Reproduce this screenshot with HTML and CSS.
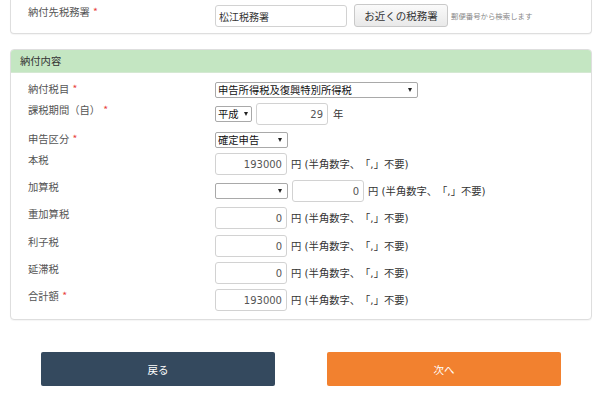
FILE: index.html
```html
<!DOCTYPE html>
<html lang="ja">
<head>
<meta charset="utf-8">
<title>納付内容</title>
<link rel="stylesheet" href="styles.css">
</head>
<body>
<div class="panel panel-top">
  <div class="row">
    <div class="label">納付先税務署 <span class="req">*</span></div>
    <div class="field">
      <input class="inp inp-office" type="text" value="松江税務署">
      <button class="btn-near" type="button">お近くの税務署</button>
      <span class="hint">郵便番号から検索します</span>
    </div>
  </div>
</div>

<div class="panel panel-main">
  <div class="panel-heading">納付内容</div>
  <div class="panel-body">
    <div class="row row-sel">
      <div class="label">納付税目 <span class="req">*</span></div>
      <div class="field">
        <span class="sel sel-wide"><select><option>申告所得税及復興特別所得税</option></select></span>
      </div>
    </div>
    <div class="row row-period">
      <div class="label">課税期間（自） <span class="req">*</span></div>
      <div class="field">
        <span class="sel sel-era"><select><option>平成</option></select></span>
        <input class="inp inp-num" type="text" value="29">
        <span class="unit">年</span>
      </div>
    </div>
    <div class="row row-sel row-kind">
      <div class="label">申告区分 <span class="req">*</span></div>
      <div class="field">
        <span class="sel sel-mid"><select><option>確定申告</option></select></span>
      </div>
    </div>
    <div class="row">
      <div class="label">本税</div>
      <div class="field">
        <input class="inp inp-num" type="text" value="193000">
        <span class="unit">円 (半角数字、「,」不要)</span>
      </div>
    </div>
    <div class="row">
      <div class="label">加算税</div>
      <div class="field">
        <span class="sel sel-mid"><select><option></option></select></span>
        <input class="inp inp-num" type="text" value="0">
        <span class="unit">円 (半角数字、「,」不要)</span>
      </div>
    </div>
    <div class="row">
      <div class="label">重加算税</div>
      <div class="field">
        <input class="inp inp-num" type="text" value="0">
        <span class="unit">円 (半角数字、「,」不要)</span>
      </div>
    </div>
    <div class="row row-gap6">
      <div class="label">利子税</div>
      <div class="field">
        <input class="inp inp-num" type="text" value="0">
        <span class="unit">円 (半角数字、「,」不要)</span>
      </div>
    </div>
    <div class="row">
      <div class="label">延滞税</div>
      <div class="field">
        <input class="inp inp-num" type="text" value="0">
        <span class="unit">円 (半角数字、「,」不要)</span>
      </div>
    </div>
    <div class="row">
      <div class="label">合計額 <span class="req">*</span></div>
      <div class="field">
        <input class="inp inp-num" type="text" value="193000">
        <span class="unit">円 (半角数字、「,」不要)</span>
      </div>
    </div>
  </div>
</div>

<div class="actions">
  <button class="btn btn-back" type="button">戻る</button>
  <button class="btn btn-next" type="button">次へ</button>
</div>
</body>
</html>
```

FILE: styles.css
```css
* { box-sizing: border-box; }

html, body {
  margin: 0;
  padding: 0;
  background: #fff;
}

body {
  font-family: "DejaVu Sans", "Noto Sans CJK JP", sans-serif;
  font-size: 10.3px;
  line-height: 14px;
  color: #333;
  width: 600px;
  height: 394px;
  overflow: hidden;
  text-spacing-trim: space-all;
}

.panel {
  margin: 0 8px 0 10px;
  border: 1px solid #dedede;
  border-radius: 4px;
  background: #fff;
  box-shadow: 0 1px 1px rgba(0, 0, 0, 0.04);
}

.panel-top {
  border-top: 0;
  border-top-left-radius: 0;
  border-top-right-radius: 0;
  padding: 5px 17px 6px 17px;
}

.panel-main {
  margin-top: 15px;
}

.panel-heading {
  background: #c4e6c2;
  border-bottom: 1px solid #d4e8d2;
  border-top-left-radius: 3px;
  border-top-right-radius: 3px;
  height: 23px;
  line-height: 23px;
  padding: 0 9px;
  color: #333;
}

.panel-body {
  padding: 9px 17px 8px 17px;
  display: flex;
  flex-direction: column;
  gap: 5px;
}

.row {
  display: flex;
  align-items: flex-start;
}

.row-kind { margin-top: 2px; }
.row-gap6 { margin-top: 1px; }

.label {
  width: 187px;
  flex: none;
  color: #555;
  line-height: 14px;
}

.req {
  color: #e8413c;
  font-family: "Noto Sans CJK JP", sans-serif;
}

.field {
  display: flex;
  align-items: center;
  gap: 4px;
  min-height: 16px;
}

.inp {
  height: 22px;
  border: 1px solid #d2d2d2;
  border-radius: 3px;
  font-family: inherit;
  font-size: 10px;
  color: #555;
  padding: 0 4px;
  margin: 0;
  background: #fff;
  outline: none;
}

.inp-office {
  width: 132px;
  color: #333;
  padding-left: 3px;
}

.inp-num {
  width: 72px;
  text-align: right;
}

.btn-near {
  height: 23px;
  width: 94px;
  margin: -1px 0 0 3px;
  padding: 0;
  border: 1px solid #c9c9c9;
  border-radius: 3px;
  background: linear-gradient(#fafafa, #e9e9e9);
  font-family: inherit;
  font-size: 10.5px;
  color: #333;
}

.hint {
  font-size: 7.4px;
  color: #888;
  margin-left: -1px;
  margin-top: 2px;
}

.unit {
  color: #333;
  white-space: nowrap;
}

.row-period .unit { margin-left: 1px; }

.sel {
  position: relative;
  display: inline-block;
  height: 16px;
}

.sel select {
  -webkit-appearance: none;
  appearance: none;
  height: 16px;
  width: 100%;
  border: 1px solid #a9a9a9;
  border-radius: 2px;
  background: #fff;
  font-family: inherit;
  font-size: 10.3px;
  line-height: 14px;
  color: #111;
  padding: 0 0 0 2px;
  margin: 0;
  outline: none;
  display: block;
}

.sel::after {
  content: "";
  position: absolute;
  right: 6px;
  top: 6px;
  border-left: 2.5px solid transparent;
  border-right: 2.5px solid transparent;
  border-top: 4px solid #222;
  pointer-events: none;
}

.sel-wide { width: 203px; }
.sel-era { width: 37px; }
.sel-era::after { right: 4px; }
.sel-mid { width: 73px; }

.actions {
  margin: 32px 8px 0 10px;
  display: flex;
  justify-content: center;
  gap: 52px;
}

.btn {
  width: 234px;
  height: 34px;
  border: 0;
  border-radius: 2px;
  color: #fff;
  font-family: inherit;
  font-size: 10.5px;
  padding: 0;
}

.btn-back { background: #34495e; }
.btn-next { background: #f2812f; }
```
